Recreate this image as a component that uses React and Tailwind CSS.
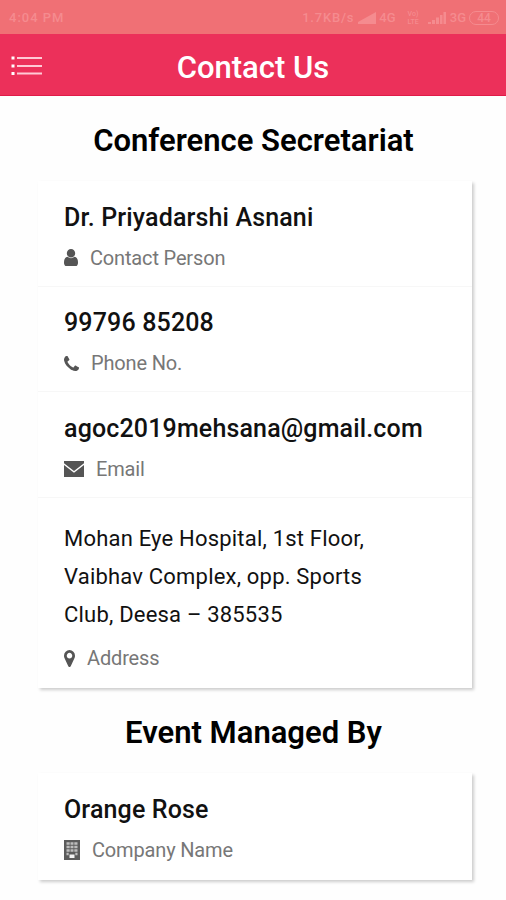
const ICONS = {
  user: 'M1536 1399q0 109-62.5 187t-150.5 78h-854q-88 0-150.5-78t-62.5-187q0-85 8.5-160.5t31.5-152 58.5-131 94-89 134.5-34.5q131 128 313 128t313-128q76 0 134.5 34.5t94 89 58.5 131 31.5 152 8.5 160.5zm-256-887q0 159-112.5 271.5t-271.5 112.5-271.5-112.5-112.5-271.5 112.5-271.5 271.5-112.5 271.5 112.5 112.5 271.5z',
  phone: 'M1600 1240q0 27-10 70.5t-21 68.5q-21 50-122 106-94 51-186 51-27 0-53-3.5t-57.5-12.5-47-14.5-55.5-20.5-49-18q-98-35-175-83-127-79-264-216t-216-264q-48-77-83-175-3-9-18-49t-20.5-55.5-14.5-47-12.5-57.5-3.5-53q0-92 51-186 56-101 106-122 25-11 68.5-21t70.5-10q14 0 21 3 18 6 53 76 11 19 30 54t35 63.5 31 53.5q3 4 17.5 25t21.5 35.5 7 28.5q0 20-28.5 50t-62 55-62 53-28.5 46q0 9 5 22.5t8.5 20.5 14 24 11.5 19q76 137 174 235t235 174q2 1 19 11.5t24 14 20.5 8.5 22.5 5q18 0 46-28.5t53-62 55-62 50-28.5q14 0 28.5 7t35.5 21.5 25 17.5q25 15 53.5 31t63.5 35 54 30q70 35 76 53 3 7 3 21z',
  marker: 'M1152 640q0-106-75-181t-181-75-181 75-75 181 75 181 181 75 181-75 75-181zm256 0q0 109-33 179l-364 774q-16 33-47.5 52t-67.5 19-67.5-19-46.5-52l-365-774q-33-70-33-179 0-212 150-362t362-150 362 150 150 362z',
  envelope: 'M0 0h20v2.200L10 10 0 2.200zM0 4l10 7.700L20 4V16H0z',
}

const contacts = [
  { value: 'Dr. Priyadarshi Asnani', label: 'Contact Person', icon: 'user', viewBox: '256 128 1280 1536', size: 'w-[14px] h-[17px] mr-3' },
  { value: '99796 85208', label: 'Phone No.', icon: 'phone', viewBox: '192 128 1408 1408', size: 'w-[15px] h-[15px] mr-3' },
  { value: 'agoc2019mehsana@gmail.com', label: 'Email', icon: 'envelope', viewBox: '0 0 20 16', size: 'w-5 h-4 mr-3' },
]

function Icon({ name, viewBox, className }) {
  return (
    <svg viewBox={viewBox} preserveAspectRatio="none" className={className} fill="#555">
      <path d={ICONS[name]} />
    </svg>
  )
}

function BuildingIcon() {
  return (
    <svg viewBox="0 0 16 20" className="w-4 h-5 mr-3" fill="none">
      <path d="M0 0h16v20H0z" fill="#5c5c5c" />
      <path d="M2.500 3.500h3.200M6.500 3.500h3M10.300 3.500h3.200M2.500 7h3.200M6.500 7h3M10.300 7h3.200M2.500 10.500h3.200M6.500 10.500h3M10.300 10.500h3.200M2.500 14h2.200M11.300 14h2.200" stroke="#bdbdbd" strokeWidth="2.4" />
      <path d="M5.500 14.500h5V18h-5z" fill="#f4f4f4" />
    </svg>
  )
}

function Signal({ className }) {
  return (
    <svg viewBox="0 0 18 12" className={className} fill="currentColor">
      <path d="M0 10h3v2H0zM4 8h3v4H4zM8 5.500h3V12H8zM12 3h2.500v9H12zM15.500 0H18v12h-2.500z" />
    </svg>
  )
}

function SignalFull({ className }) {
  return (
    <svg viewBox="0 0 18 12" className={className} fill="currentColor">
      <path d="M0 12v-2L18 0v12z" />
    </svg>
  )
}

function StatusBar() {
  return (
    <div className="h-[34px] bg-[#f07075] text-[#f58b8f] flex items-center pt-px pl-[9px] pr-[7px] text-[13px] leading-none">
      <span className="font-medium tracking-[1px]">4:04 PM</span>
      <div className="ml-auto flex items-center font-medium">
        <span className="mr-1 tracking-[0.8px]">1.7KB/s</span>
        <SignalFull className="w-[18px] h-3 mr-[3px]" />
        <span className="mr-3">4G</span>
        <span className="flex flex-col text-[7px] leading-[8px] mr-[9px]">
          <span>Vo)</span>
          <span>LTE</span>
        </span>
        <Signal className="w-[18px] h-3 mr-[4px]" />
        <span className="mr-[3px]">3G</span>
        <span className="w-[30px] h-[14px] rounded-full border border-current flex items-center justify-center text-[12px]">44</span>
      </div>
    </div>
  )
}

function Header() {
  return (
    <header className="relative h-[62px] bg-[#ec305a] border-b border-[#e01b48] flex items-center justify-center pt-[5px]">
      <svg viewBox="0 0 32 22" className="absolute left-[11px] top-[20px] w-8 h-[22px]" fill="none">
        <path d="M6 4h25M6 12h25M6 19.500h25" stroke="#ffc9d5" strokeWidth="2" />
        <path d="M0.500 4h3M0.500 12h3M0.500 19.500h3" stroke="#fff" strokeWidth="3" />
      </svg>
      <h1 className="text-[31px] font-medium text-white leading-none">Contact Us</h1>
    </header>
  )
}

function Heading({ className, children }) {
  return (
    <h2 className={`-ml-[3px] pt-[27px] text-[31px] font-semibold leading-9 text-center text-black ${className}`}>
      {children}
    </h2>
  )
}

function Value({ children }) {
  return <p className="text-[25px] font-medium leading-[30px] text-[#111] tracking-[0.15px]">{children}</p>
}

function Label({ children }) {
  return <span className="text-[20px] text-[#777] leading-6 -tracking-[0.16px]">{children}</span>
}

export default function App() {
  return (
    <div className="w-full h-[900px] bg-[#fefefe] overflow-hidden font-['Roboto',sans-serif]">
      <StatusBar />
      <Header />

      <main className="pl-[38px] pr-[34px]">
        <Heading className="h-[85px]">Conference Secretariat</Heading>

        <section className="h-[507px] bg-white shadow-[2px_2px_3px_rgba(0,0,0,0.2)]">
          {contacts.map(c => (
            <div key={c.label} className="h-[105.5px] pl-[26px] pt-[21.9px] border-b border-[#f7f7f7]">
              <Value>{c.value}</Value>
              <div className="flex items-center mt-[12.7px]">
                <Icon name={c.icon} viewBox={c.viewBox} className={c.size} />
                <Label>{c.label}</Label>
              </div>
            </div>
          ))}

          <div className="pl-[26px] pt-[22px]">
            <p className="text-[22px] leading-[38px] text-[#111] tracking-[0.2px]">
              Mohan Eye Hospital, 1st Floor,<br />
              Vaibhav Complex, opp. Sports<br />
              Club, Deesa – 385535
            </p>
            <div className="flex items-center mt-[12.5px]">
              <Icon name="marker" viewBox="384 128 1024 1536" className="w-[11px] h-[17px] mr-3" />
              <Label>Address</Label>
            </div>
          </div>
        </section>

        <Heading className="h-[85px]">Event Managed By</Heading>

        <section className="h-[107px] bg-white pl-[26px] pt-[22px] shadow-[2px_2px_3px_rgba(0,0,0,0.2)]">
          <Value>Orange Rose</Value>
          <div className="flex items-center mt-[12.5px]">
            <BuildingIcon />
            <Label>Company Name</Label>
          </div>
        </section>
      </main>
    </div>
  )
}
